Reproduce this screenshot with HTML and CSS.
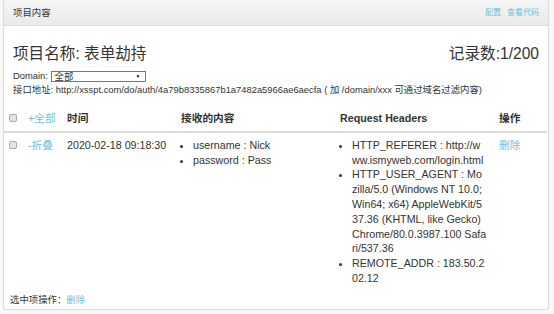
FILE: index.html
```html
<!DOCTYPE html>
<html lang="zh-CN">
<head>
    <meta charset="UTF-8">
    <title>项目内容</title>
    <link rel="stylesheet" href="styles.css">
</head>
<body>
    <div class="panel">
        <div class="panel-heading">
            <span class="panel-title">项目内容</span>
            <span class="heading-links">
                <a href="#">配置</a>
                <a href="#">查看代码</a>
            </span>
        </div>
        <div class="panel-body">
            <div class="title-row">
                <h3>项目名称: 表单劫持</h3>
                <h3>记录数:1/200</h3>
            </div>
            <div class="domain-row">
                Domain: <span class="select">全部<span class="caret">▼</span></span>
            </div>
            <div class="api-row">接口地址: http://xsspt.com/do/auth/4a79b8335867b1a7482a5966ae6aecfa ( 加 /domain/xxx 可通过域名过滤内容)</div>

            <table class="records">
                <thead>
                    <tr>
                        <th class="col-check"><span class="checkbox"></span></th>
                        <th class="col-toggle"><a href="#">+全部</a></th>
                        <th class="col-time">时间</th>
                        <th class="col-content">接收的内容</th>
                        <th class="col-headers">Request Headers</th>
                        <th class="col-op">操作</th>
                    </tr>
                </thead>
                <tbody>
                    <tr>
                        <td><span class="checkbox"></span></td>
                        <td><a href="#">-折叠</a></td>
                        <td>2020-02-18 09:18:30</td>
                        <td>
                            <ul>
                                <li>username : Nick</li>
                                <li>password : Pass</li>
                            </ul>
                        </td>
                        <td>
                            <ul class="headers">
                                <li>HTTP_REFERER : http://www.ismyweb.com/login.html</li>
                                <li>HTTP_USER_AGENT : Mozilla/5.0 (Windows NT 10.0; Win64; x64) AppleWebKit/537.36 (KHTML, like Gecko) Chrome/80.0.3987.100 Safari/537.36</li>
                                <li>REMOTE_ADDR : 183.50.202.12</li>
                            </ul>
                        </td>
                        <td><a href="#">删除</a></td>
                    </tr>
                </tbody>
            </table>
        </div>
        <div class="panel-footer">选中项操作：<a href="#">删除</a></div>
    </div>
</body>
</html>
```

FILE: styles.css
```css
* {
    margin: 0;
    padding: 0;
    box-sizing: border-box;
}

body {
    font-family: 'Liberation Sans', 'Noto Sans CJK SC', sans-serif;
    font-size: 9.4px;
    line-height: 14px;
    color: #333;
    background: #f8f8f8;
}

a {
    color: #6cc3dc;
    text-decoration: none;
}

.panel {
    margin-left: 3px;
    width: 546px;
    background: white;
    border: 1px solid #ddd;
    border-top: none;
    border-radius: 0 0 3px 3px;
    box-shadow: 0 1px 2px rgba(0,0,0,0.06);
}

.panel-heading {
    height: 26px;
    display: flex;
    align-items: center;
    justify-content: space-between;
    padding: 0 9px;
    background: linear-gradient(to bottom, #f6f6f6 0%, #e9e9e9 100%);
    border-bottom: 1px solid #dcdcdc;
}

.panel-title {
    font-size: 9.4px;
}

.heading-links {
    display: flex;
    gap: 6px;
    font-size: 8px;
}

.panel-body {
    padding: 19px 9px 0;
}

.title-row {
    display: flex;
    justify-content: space-between;
}

h3 {
    font-size: 15.6px;
    line-height: 18px;
    font-weight: normal;
}

.domain-row {
    margin-top: 6px;
}

.select {
    display: inline-flex;
    align-items: center;
    justify-content: space-between;
    width: 95px;
    height: 11px;
    padding: 0 4px 0 3px;
    border: 1px solid #777;
    background: white;
    line-height: 9px;
    vertical-align: -1px;
}

.caret {
    font-size: 5px;
    color: #111;
}

.records {
    width: 543px;
    margin: 9px -9px 0;
    border-collapse: collapse;
    table-layout: fixed;
    font-size: 10.7px;
    line-height: 14.8px;
}

.records th,
.records td {
    padding: 5px 6px;
    text-align: left;
    vertical-align: top;
}

.records th {
    border-bottom: 2px solid #ddd;
    white-space: nowrap;
}

.records .col-check { width: 18px; padding-left: 5px; padding-right: 0; }
.records .col-toggle { width: 39px; font-weight: normal; }
.records .col-time { width: 114px; }
.records .col-content { width: 159px; }
.records .col-headers { width: 159px; }
.records .col-op { width: 54px; }

.records td:first-child {
    padding-left: 5px;
    padding-right: 0;
}

.records td:nth-child(2) {
    white-space: nowrap;
}

.checkbox {
    display: inline-block;
    width: 8px;
    height: 8px;
    margin-top: 3px;
    background: #e4e4e4;
    border: 1px solid #a9a9a9;
    border-radius: 2px;
    vertical-align: top;
}

.records ul {
    padding-left: 12px;
}

.headers {
    word-break: break-all;
}

.panel-footer {
    padding: 2px 6px 2px;
}
```
